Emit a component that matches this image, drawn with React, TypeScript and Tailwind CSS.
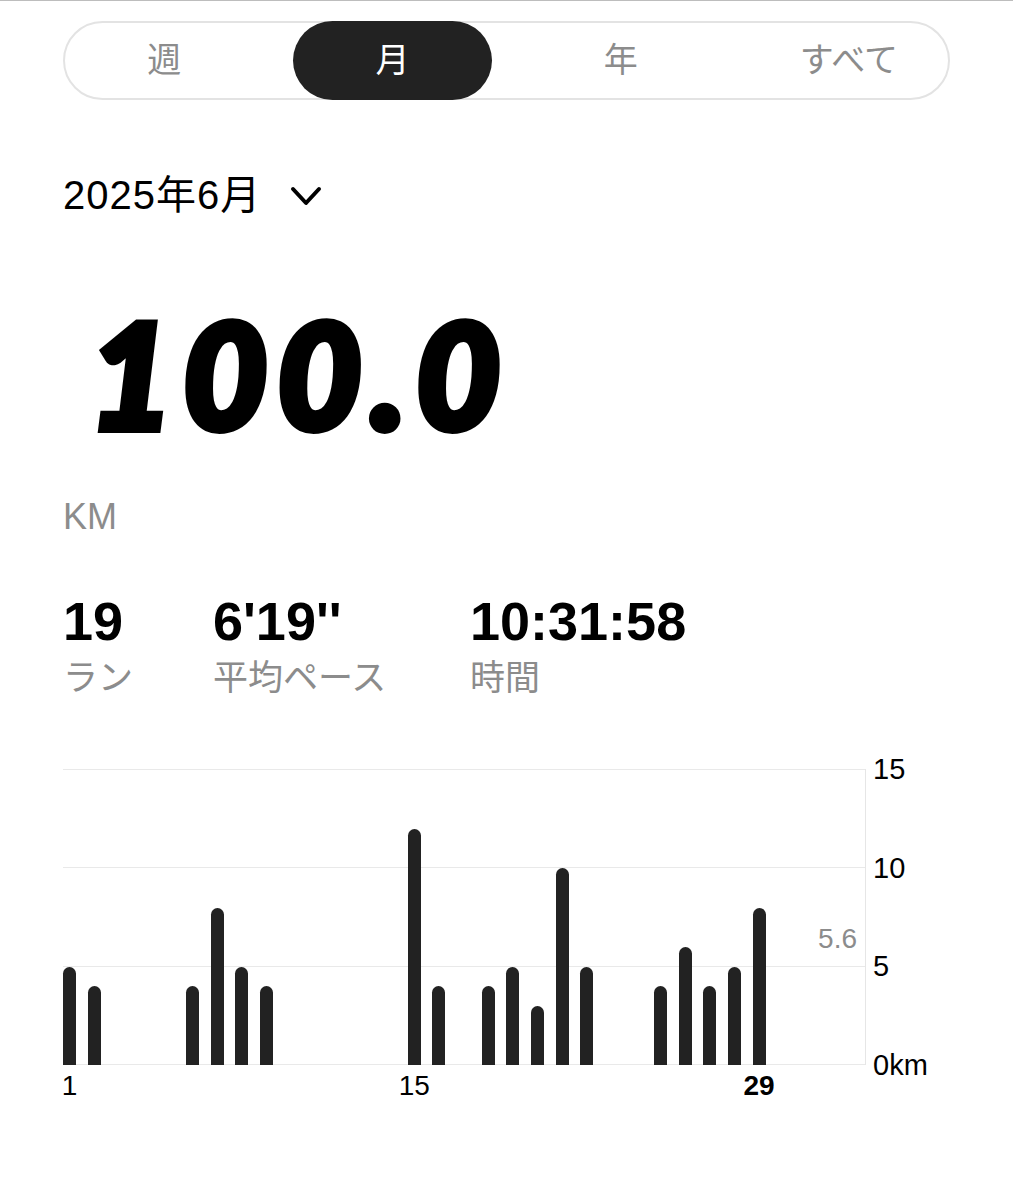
const tabs = ["週", "月", "年", "すべて"] as const;

// km per day of June, 0 = no run
const days = [
  5, 4, 0, 0, 0, 4, 8, 5, 4, 0, 0, 0, 0, 0, 12, 4, 0, 4, 5, 3, 10, 5, 0, 0, 4, 6, 4, 5, 8, 0,
];

const stats = [
  { value: "19", label: "ラン", width: "w-[150px]" },
  { value: "6'19''", label: "平均ペース", width: "w-[257px]" },
  { value: "10:31:58", label: "時間", width: "" },
];

const PX_PER_KM = 295 / 15;

export default function App() {
  return (
    <div className="min-h-[1200px] w-[1013px] border-t border-[#bdbdbd] bg-white font-['Liberation_Sans','Noto_Sans_CJK_JP',sans-serif] text-black">
      <div className="px-[63px]">
        {/* period switch */}
        <div className="mt-[20px] grid h-[79px] grid-cols-4 gap-[30px] rounded-full border-2 border-[#e3e3e3]">
          {tabs.map((tab) => (
            <div
              key={tab}
              className={
                tab === "月"
                  ? "-my-[2px] flex items-center justify-center rounded-[40px] bg-[#222] text-[34px] text-white"
                  : "flex items-center justify-center text-[34px] text-[#8c8c8c]"
              }
            >
              {tab}
            </div>
          ))}
        </div>

        {/* month picker */}
        <div className="mt-[72px] flex items-center gap-[29px]">
          <span className="text-[40px] leading-[46px] tracking-[1px]">2025年6月</span>
          <svg viewBox="0 0 32 20" className="mt-[2px] h-[20px] w-[32px]" fill="none" stroke="currentColor" strokeWidth={4} strokeLinecap="round" strokeLinejoin="round">
            <polyline points="3,3 16,17 29,3" />
          </svg>
        </div>

        {/* total distance */}
        <div className="mt-[80px] pl-[26px] font-['Lato',sans-serif] text-[145px] font-black italic leading-[150px] tracking-[10px] [-webkit-text-stroke:8px_#000]">
          100.0
        </div>
        <div className="mt-[49px] text-[36px] leading-[40px] text-[#8c8c8c]">KM</div>

        {/* summary */}
        <div className="mt-[57px] flex">
          {stats.map((s) => (
            <div key={s.label} className={s.width}>
              <div className="text-[54px] font-bold leading-[54px]">{s.value}</div>
              <div className="mt-[10px] text-[35px] leading-[40px] text-[#8c8c8c]">{s.label}</div>
            </div>
          ))}
        </div>

        {/* chart */}
        <div className="mt-[71px] flex">
          <div className="w-[803px] shrink-0">
            <div className="relative h-[296px] border-r border-[#e6e6e6]">
              <div className="flex h-full flex-col">
                <div className="flex-1 border-t border-[#e9e9e9]" />
                <div className="flex-1 border-t border-[#e9e9e9]" />
                <div className="flex-1 border-y border-[#e9e9e9]" />
              </div>
              <span className="absolute right-[8px] top-[155px] text-[28px] leading-[30px] text-[#8c8c8c]">5.6</span>
              <div className="absolute inset-0 flex items-end">
                {days.map((km, i) => (
                  <div key={i} className="flex w-[24.64px] shrink-0">
                    {km > 0 && (
                      <div
                        className="w-[13px] rounded-t-[7px] bg-[#222]"
                        style={{ height: km * PX_PER_KM }}
                      />
                    )}
                  </div>
                ))}
              </div>
            </div>
            <div className="flex pt-[6px] text-[28px] leading-[30px]">
              {days.map((_, i) => (
                <div key={i} className="flex w-[24.64px] shrink-0">
                  <div className="flex w-[13px] justify-center whitespace-nowrap">
                    {i === 0 && "1"}
                    {i === 14 && "15"}
                    {i === 28 && <span className="font-bold">29</span>}
                  </div>
                </div>
              ))}
            </div>
          </div>
          <div className="-my-[13px] ml-[7px] flex h-[322px] flex-col justify-between text-[29px] leading-[26px]">
            <span>15</span>
            <span>10</span>
            <span>5</span>
            <span>0km</span>
          </div>
        </div>
      </div>
    </div>
  );
}
